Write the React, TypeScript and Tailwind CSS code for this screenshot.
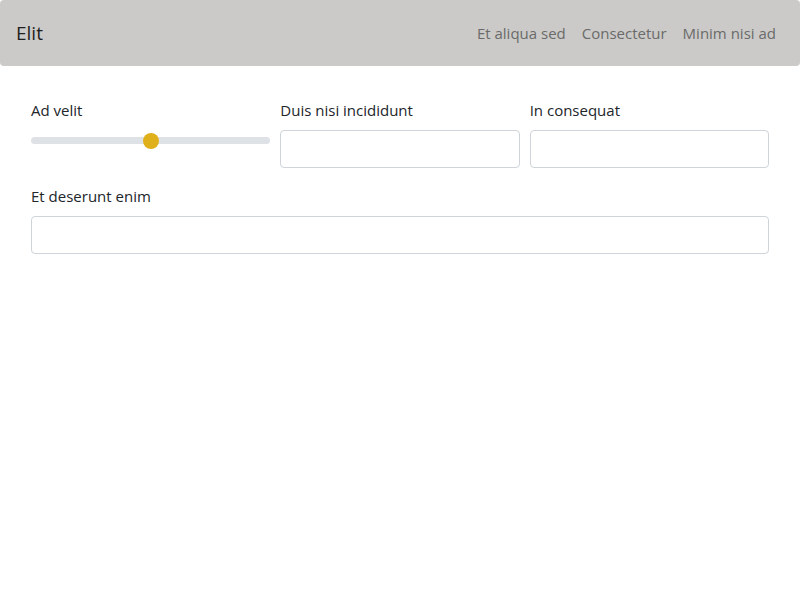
export default function App() {
  return (
    <div className="min-h-screen w-full bg-white font-['Open_Sans',sans-serif] text-[#212529]">
      <header className="flex h-[66px] items-center justify-between rounded-[4px] bg-[#cbcac8] pl-4 pr-6">
        <span className="text-[19px] text-[#1f1f1f]">Elit</span>
        <nav className="flex items-center gap-4 text-[15px] text-[#6a6a6a]">
          <a href="#">Et aliqua sed</a>
          <a href="#">Consectetur</a>
          <a href="#">Minim nisi ad</a>
        </nav>
      </header>

      <main className="px-[31px] pt-[33px]">
        <div className="grid grid-cols-3 gap-x-[10px] gap-y-[17px]">
          <div>
            <label className="block text-[15px] leading-[22px]">Ad velit</label>
            <div className="relative mt-[16px] h-[7px] w-full rounded-full bg-[#dee2e6]">
              <div className="absolute top-1/2 left-1/2 h-4 w-4 -translate-x-1/2 -translate-y-1/2 rounded-full bg-[#dfb01a]" />
            </div>
          </div>
          <div>
            <label className="block text-[15px] leading-[22px]">Duis nisi incididunt</label>
            <input className="mt-[9px] block h-[38px] w-full rounded-[4px] border border-[#ced4da] bg-white px-3" />
          </div>
          <div>
            <label className="block text-[15px] leading-[22px]">In consequat</label>
            <input className="mt-[9px] block h-[38px] w-full rounded-[4px] border border-[#ced4da] bg-white px-3" />
          </div>
          <div className="col-span-3">
            <label className="block text-[15px] leading-[22px]">Et deserunt enim</label>
            <input className="mt-[9px] block h-[38px] w-full rounded-[4px] border border-[#ced4da] bg-white px-3" />
          </div>
        </div>
      </main>
    </div>
  );
}
